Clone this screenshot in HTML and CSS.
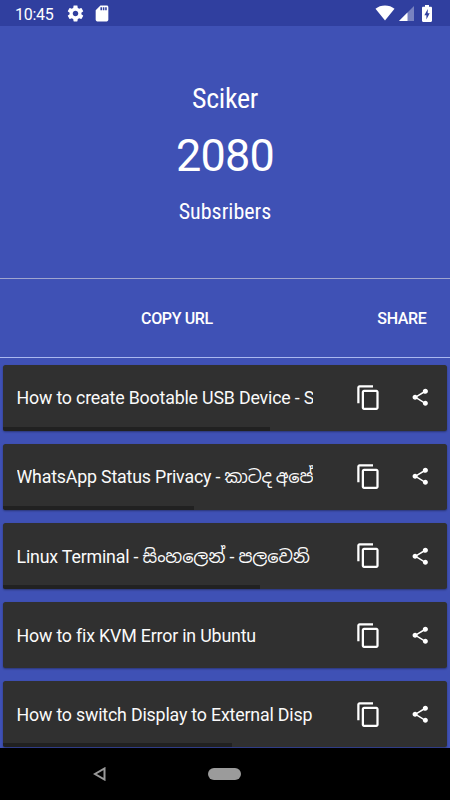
FILE: index.html
```html
<!DOCTYPE html>
<html lang="en">
<head>
<meta charset="utf-8">
<title>Sciker</title>
<link rel="stylesheet" href="styles.css">
</head>
<body>
<svg class="defs" width="0" height="0">
  <symbol id="copy" viewBox="0 0 24 24"><path d="M16 1H4c-1.1 0-2 .9-2 2v14h2V3h12V1zm3 4H8c-1.1 0-2 .9-2 2v14c0 1.1.9 2 2 2h11c1.1 0 2-.9 2-2V7c0-1.1-.9-2-2-2zm0 16H8V7h11v14z"/></symbol>
  <symbol id="share" viewBox="0 0 24 24"><path d="M18 16.08c-.76 0-1.44.3-1.96.77L8.91 12.7c.05-.23.09-.46.09-.7s-.04-.47-.09-.7l7.05-4.11c.54.5 1.25.81 2.04.81 1.66 0 3-1.34 3-3s-1.34-3-3-3-3 1.34-3 3c0 .24.04.47.09.7L8.04 9.81C7.5 9.31 6.79 9 6 9c-1.66 0-3 1.34-3 3s1.34 3 3 3c.79 0 1.5-.31 2.04-.81l7.12 4.16c-.05.21-.08.43-.08.65 0 1.61 1.31 2.92 2.92 2.92 1.61 0 2.92-1.31 2.92-2.92s-1.31-2.92-2.92-2.92z"/></symbol>
</svg>
<div class="screen">
  <header class="status">
    <span class="time">10:45</span>
    <svg class="gear" viewBox="0 0 24 24"><path d="M19.43 12.98c.04-.32.07-.64.07-.98s-.03-.66-.07-.98l2.11-1.65c.19-.15.24-.42.12-.64l-2-3.46c-.12-.22-.39-.3-.61-.22l-2.49 1c-.52-.4-1.08-.73-1.69-.98l-.38-2.65C14.46 2.18 14.25 2 14 2h-4c-.25 0-.46.18-.49.42l-.38 2.65c-.61.25-1.17.59-1.69.98l-2.49-1c-.23-.09-.49 0-.61.22l-2 3.46c-.13.22-.07.49.12.64l2.11 1.65c-.04.32-.07.65-.07.98s.03.66.07.98l-2.11 1.65c-.19.15-.24.42-.12.64l2 3.46c.12.22.39.3.61.22l2.49-1c.52.4 1.08.73 1.69.98l.38 2.65c.03.24.24.42.49.42h4c.25 0 .46-.18.49-.42l.38-2.65c.61-.25 1.17-.59 1.69-.98l2.49 1c.23.09.49 0 .61-.22l2-3.46c.12-.22.07-.49-.12-.64l-2.11-1.65zM12 15.5c-1.93 0-3.5-1.57-3.5-3.5s1.57-3.5 3.5-3.5 3.5 1.57 3.5 3.5-1.57 3.5-3.5 3.5z"/></svg>
    <svg class="sd" viewBox="0 0 24 24"><path d="M18 2h-8L4.020 8 4 20c0 1.100.9 2 2 2h12c1.100 0 2-.9 2-2V4c0-1.100-.9-2-2-2zm-6 6h-2V4h2v4zm3 0h-2V4h2v4zm3 0h-2V4h2v4z"/></svg>
    <span class="spacer"></span>
    <svg class="wifi" viewBox="0 0 20 16"><path d="M10 15.500 0.500 3.800C3 1.700 6.400.5 10 .5s7 1.200 9.500 3.300z"/></svg>
    <svg class="signal" viewBox="0 0 15 15"><path class="dim" d="M0 15 15 0v15z"/><path d="M0 15 8.500 6.500V15z"/></svg>
    <svg class="battery" viewBox="0 0 10 17"><path d="M3 0h4v1.700h1.800c.7 0 1.200.5 1.200 1.200v12.900c0 .7-.5 1.200-1.200 1.200H1.200C.5 17 0 16.500 0 15.800V2.900c0-.7.5-1.200 1.200-1.200H3z"/><path class="bolt" d="M5.800 4 2.400 10.200h2V14.500L7.700 8.300h-2z"/></svg>
  </header>
  <section class="hero">
    <div class="name">Sciker</div>
    <div class="count">2080</div>
    <div class="label">Subsribers</div>
  </section>
  <nav class="actions">
    <span class="copy-url">COPY URL</span>
    <span class="share-url">SHARE</span>
  </nav>
  <main class="list">
    <article class="card">
      <div class="title">How to create Bootable USB Device - S</div>
      <svg class="copy"><use href="#copy"/></svg><svg class="share"><use href="#share"/></svg>
      <i class="bar" style="width:267px"></i>
    </article>
    <article class="card">
      <div class="title">WhatsApp Status Privacy - <span class="si">කාටද අපේ</span></div>
      <svg class="copy"><use href="#copy"/></svg><svg class="share"><use href="#share"/></svg>
      <i class="bar" style="width:191px"></i>
    </article>
    <article class="card">
      <div class="title">Linux Terminal - <span class="si">සිංහලෙන් - පලවෙනි</span></div>
      <svg class="copy"><use href="#copy"/></svg><svg class="share"><use href="#share"/></svg>
      <i class="bar" style="width:257px"></i>
    </article>
    <article class="card">
      <div class="title">How to fix KVM Error in Ubuntu</div>
      <svg class="copy"><use href="#copy"/></svg><svg class="share"><use href="#share"/></svg>
    </article>
    <article class="card">
      <div class="title">How to switch Display to External Disp</div>
      <svg class="copy"><use href="#copy"/></svg><svg class="share"><use href="#share"/></svg>
      <i class="bar" style="width:229px"></i>
    </article>
  </main>
  <footer class="navbar">
    <svg class="back" viewBox="0 0 12 14"><path d="M11 1.500v11L1.500 7z"/></svg>
    <span class="home"></span>
  </footer>
</div>
</body>
</html>
```
FILE: styles.css
```css
* { box-sizing: border-box; }
body { margin: 0; }
.defs { display: block; }
.screen {
  width: 450px;
  height: 800px;
  display: flex;
  flex-direction: column;
  overflow: hidden;
  background: #3f51b5;
  color: #fff;
  font-family: Roboto, "Noto Sans Sinhala", sans-serif;
}
svg { fill: #fff; flex: none; }
.status {
  flex: none;
  height: 26px;
  padding: 0 18px 0 15px;
  display: flex;
  align-items: center;
  background: #303f9f;
}
.time { font-size: 16px; font-weight: 450; letter-spacing: -.25px; line-height: 26px; width: 40px; margin-top: 3px; white-space: nowrap; }
.gear { width: 19px; height: 19px; margin-left: 10.500px; }
.sd { width: 20px; height: 19px; margin-left: 7px; }
.spacer { flex: 1; }
.wifi { width: 20px; height: 16px; }
.signal { width: 15px; height: 15px; margin-left: 4px; margin-top: 1px; }
.battery { width: 10px; height: 17px; margin-left: 8px; }
.dim { opacity: .35; }
.bolt { fill: #303f9f; }
.hero {
  flex: none;
  height: 252px;
  padding-top: 56px;
  display: flex;
  flex-direction: column;
  align-items: center;
}
.name, .label { font-family: "Roboto Condensed", Roboto, sans-serif; font-stretch: 75%; }
.name { font-size: 28px; line-height: 34px; letter-spacing: -.3px; }
.count { font-size: 45px; line-height: 54px; margin-top: 13px; letter-spacing: -.8px; }
.label { font-size: 22px; line-height: 26px; margin-top: 16px; }
.actions {
  flex: none;
  height: 80px;
  border-top: 1px solid #9fa5cf;
  border-bottom: 1px solid #aab8f0;
  padding-right: 23.500px;
  display: flex;
  align-items: center;
  justify-content: flex-end;
  font-size: 16px;
  font-weight: 500;
  letter-spacing: -.35px;
}
.copy-url { margin-right: 164.500px; }
.list {
  flex: none;
  height: 390px;
  padding: 6.500px 3px 0 3px;
  display: flex;
  flex-direction: column;
  gap: 13.200px;
  overflow: hidden;
}
.card {
  position: relative;
  flex: none;
  height: 66px;
  padding-left: 13.500px;
  display: flex;
  align-items: center;
  background: #303030;
  border-radius: 2.500px;
  overflow: hidden;
  box-shadow: 0 1px 2px rgba(0, 0, 0, .35);
}
.title { width: 296.500px; overflow: hidden; white-space: nowrap; font-size: 17.800px; letter-spacing: -.18px; line-height: 30px; margin-top: 1.500px; color: #fafafa; }
.copy { width: 27px; height: 27px; margin-left: 41.500px; }
.share { width: 20.500px; height: 20.500px; margin-left: 28.500px; }
.bar { position: absolute; left: 0; bottom: 0; height: 4px; background: #212121; }
.navbar {
  flex: none;
  height: 52px;
  background: #000;
  padding-left: 93px;
  display: flex;
  align-items: center;
}
.back { width: 13px; height: 14px; fill: none; stroke: #999; stroke-width: 2; }
.home { width: 33px; height: 12px; margin-left: 102px; border-radius: 6px; background: #9b9b9b; }
```
